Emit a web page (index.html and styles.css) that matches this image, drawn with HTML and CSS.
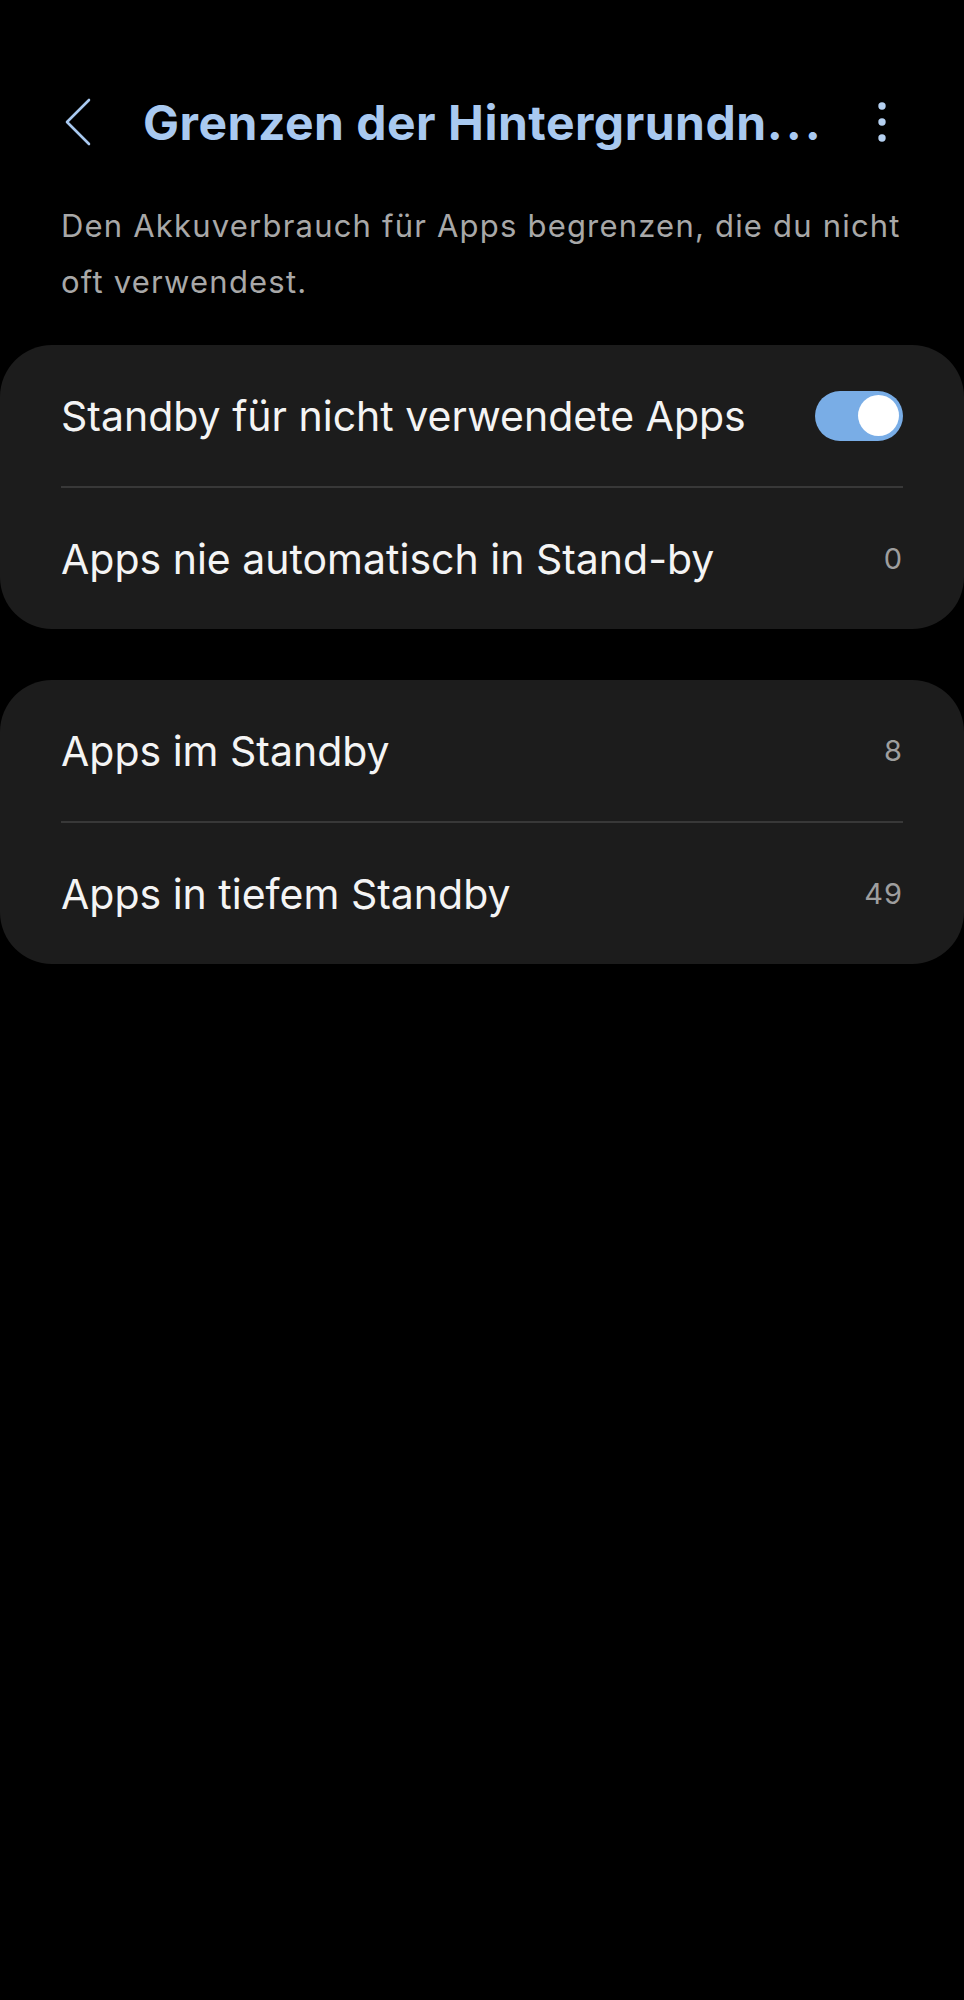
FILE: index.html
```html
<!DOCTYPE html>
<html lang="de">
<head>
  <meta charset="UTF-8" />
  <meta name="viewport" content="width=device-width, initial-scale=1.0" />
  <title>Grenzen der Hintergrundnutzung</title>
  <link rel="stylesheet" href="styles.css">
</head>
<body>
  <header class="topbar">
    <button class="back" aria-label="Zurück">
      <svg width="28" height="48" viewBox="0 0 28 48"><path d="M25 2 L3 24 L25 46" fill="none" stroke="#a9c9f0" stroke-width="2.6" stroke-linecap="round" stroke-linejoin="round"/></svg>
    </button>
    <h1>Grenzen der Hintergrundn<span class="dots">...</span></h1>
    <button class="more" aria-label="Mehr">
      <svg width="10" height="42" viewBox="0 0 10 42"><circle cx="5" cy="5" r="3.7" fill="#b5d0f0"/><circle cx="5" cy="21" r="3.7" fill="#b5d0f0"/><circle cx="5" cy="37" r="3.7" fill="#b5d0f0"/></svg>
    </button>
  </header>

  <p class="intro">Den Akkuverbrauch für Apps begrenzen, die du nicht oft verwendest.</p>

  <section class="card">
    <div class="row">
      <span class="label">Standby für nicht verwendete Apps</span>
      <span class="switch on"><span class="knob"></span></span>
    </div>
    <div class="divider"></div>
    <div class="row">
      <span class="label">Apps nie automatisch in Stand-by</span>
      <span class="value">0</span>
    </div>
  </section>

  <section class="card">
    <div class="row">
      <span class="label">Apps im Standby</span>
      <span class="value">8</span>
    </div>
    <div class="divider"></div>
    <div class="row">
      <span class="label">Apps in tiefem Standby</span>
      <span class="value">49</span>
    </div>
  </section>
</body>
</html>
```

FILE: styles.css
```css
* { box-sizing: border-box; margin: 0; padding: 0; font-family: 'Inter', 'Roboto', sans-serif; font-feature-settings: "calt" 0; }
body { background: #000; color: #f2f2f2; width: 964px; min-height: 2000px; }
button { background: none; border: none; cursor: pointer; }

.topbar { display: flex; align-items: center; height: 100px; margin-top: 72px; }
.topbar .back { display: flex; margin-left: 64px; }
.topbar h1 { flex: 1; margin-left: 51px; font-size: 48px; font-weight: 700; color: #a9c9f0; white-space: nowrap; letter-spacing: 0.5px; }
.topbar h1 .dots { letter-spacing: 3px; }
.topbar .more { display: flex; margin-right: 77px; }

.intro { margin: 26px 61px 0; font-size: 31px; line-height: 56px; letter-spacing: 1.2px; color: #a8a8a8; }

.card { background: #1c1c1c; border-radius: 52px; margin-top: 35px; }
.card + .card { margin-top: 51px; }
.row { display: flex; align-items: center; justify-content: space-between; height: 141px; padding: 0 61px; }
.label { font-size: 41px; color: #f4f4f4; }
.value { font-size: 29px; letter-spacing: 1px; color: #9e9e9e; }
.divider { height: 2px; background: #383838; margin: 0 61px; }

.switch { display: flex; align-items: center; width: 88px; height: 50px; border-radius: 25px; background: #79ade6; padding: 0 4px; }
.switch.on { justify-content: flex-end; }
.knob { width: 41px; height: 41px; border-radius: 50%; background: #fff; }
```
